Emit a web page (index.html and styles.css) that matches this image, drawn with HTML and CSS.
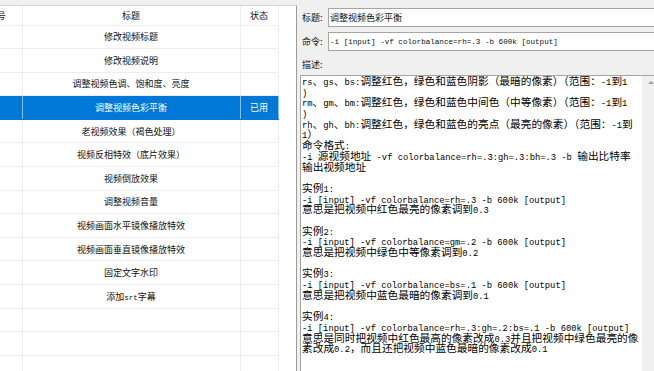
FILE: index.html
```html
<!DOCTYPE html>
<html>
<head>
  <meta charset="utf-8">
  <title>视频命令</title>
  <link rel="stylesheet" href="styles.css">
</head>
<body>
  <div class="window">
    <div class="list">
      <table class="grid">
        <colgroup>
          <col class="c-no">
          <col class="c-title">
          <col class="c-state">
        </colgroup>
        <thead>
          <tr><th>序号</th><th>标题</th><th>状态</th></tr>
        </thead>
        <tbody>
          <tr><td></td><td>修改视频标题</td><td></td></tr>
          <tr><td></td><td>修改视频说明</td><td></td></tr>
          <tr><td></td><td>调整视频色调、饱和度、亮度</td><td></td></tr>
          <tr class="sel"><td></td><td>调整视频色彩平衡</td><td>已用</td></tr>
          <tr><td></td><td>老视频效果（褐色处理）</td><td></td></tr>
          <tr><td></td><td>视频反相特效（底片效果）</td><td></td></tr>
          <tr><td></td><td>视频倒放效果</td><td></td></tr>
          <tr><td></td><td>调整视频音量</td><td></td></tr>
          <tr><td></td><td>视频画面水平镜像播放特效</td><td></td></tr>
          <tr><td></td><td>视频画面垂直镜像播放特效</td><td></td></tr>
          <tr><td></td><td>固定文字水印</td><td></td></tr>
          <tr><td></td><td>添加<span class="en">srt</span>字幕</td><td></td></tr>
          <tr><td></td><td></td><td></td></tr>
          <tr><td></td><td></td><td></td></tr>
          <tr><td></td><td></td><td></td></tr>
        </tbody>
      </table>
    </div>

    <div class="detail">
      <div class="field">
        <span class="label">标题:</span>
        <div class="box">调整视频色彩平衡</div>
      </div>
      <div class="field">
        <span class="label">命令:</span>
        <div class="box cmd">-i [input] -vf colorbalance=rh=.3 -b 600k [output]</div>
      </div>
      <div class="caption">描述:</div>
      <div class="memo">
        <div class="memo-text">
          <div class="ln"><span class="en">rs</span>、<span class="en">gs</span>、<span class="en">bs:</span>调整红色，绿色和蓝色阴影（最暗的像素）（范围：<span class="en">-1</span>到<span class="en">1</span></div>
          <div class="ln"><span class="en">)</span></div>
          <div class="ln"><span class="en">rm</span>、<span class="en">gm</span>、<span class="en">bm:</span>调整红色，绿色和蓝色中间色（中等像素）（范围：<span class="en">-1</span>到<span class="en">1</span></div>
          <div class="ln"><span class="en">)</span></div>
          <div class="ln"><span class="en">rh</span>、<span class="en">gh</span>、<span class="en">bh:</span>调整红色，绿色和蓝色的亮点（最亮的像素）（范围：<span class="en">-1</span>到</div>
          <div class="ln"><span class="en">1</span>）</div>
          <div class="ln">命令格式<span class="en">:</span></div>
          <div class="ln"><span class="en">-i </span>源视频地址<span class="en"> -vf colorbalance=rh=.3:gh=.3:bh=.3 -b </span>输出比特率</div>
          <div class="ln">输出视频地址</div>
          <div class="ln"></div>
          <div class="ln">实例<span class="en">1:</span></div>
          <div class="ln"><span class="en">-i [input] -vf colorbalance=rh=.3 -b 600k [output]</span></div>
          <div class="ln">意思是把视频中红色最亮的像素调到<span class="en">0.3</span></div>
          <div class="ln"></div>
          <div class="ln">实例<span class="en">2:</span></div>
          <div class="ln"><span class="en">-i [input] -vf colorbalance=gm=.2 -b 600k [output]</span></div>
          <div class="ln">意思是把视频中绿色中等像素调到<span class="en">0.2</span></div>
          <div class="ln"></div>
          <div class="ln">实例<span class="en">3:</span></div>
          <div class="ln"><span class="en">-i [input] -vf colorbalance=bs=.1 -b 600k [output]</span></div>
          <div class="ln">意思是把视频中蓝色最暗的像素调到<span class="en">0.1</span></div>
          <div class="ln"></div>
          <div class="ln">实例<span class="en">4:</span></div>
          <div class="ln"><span class="en">-i [input] -vf colorbalance=rh=.3:gh=.2:bs=.1 -b 600k [output]</span></div>
          <div class="ln">意思是同时把视频中红色最高的像素改成<span class="en">0.3</span>并且把视频中绿色最亮的像</div>
          <div class="ln">素改成<span class="en">0.2</span>，而且还把视频中蓝色最暗的像素改成<span class="en">0.1</span></div>
        </div>
        <div class="scroll"><span class="arrow"></span></div>
      </div>
    </div>
  </div>
</body>
</html>
```

FILE: styles.css
```css
html, body {
  margin: 0;
  height: 100%;
}

body {
  background-color: #f0f0f0;
  font-family: "Noto Sans CJK SC", sans-serif;
  color: #111;
  overflow: hidden;
}

.window {
  display: flex;
  height: 371px;
  padding-top: 5px;
  box-sizing: border-box;
}

/* List Styling */
.list {
  width: 296px;
  flex: none;
  background-color: #fff;
  border-top: 1px solid #d4d4d4;
  border-right: 1px solid #9c9c9c;
  overflow: hidden;
}

.grid {
  width: 306px;
  margin-left: -28px;
  border-collapse: collapse;
  table-layout: fixed;
  font-size: 9px;
}

.c-no { width: 50px; }
.c-title { width: 218px; }
.c-state { width: 38px; }

.grid th,
.grid td {
  padding: 0;
  text-align: center;
  font-weight: normal;
  white-space: nowrap;
  border-right: 1px solid #ededed;
  border-bottom: 1px solid #ededed;
}

.grid thead tr {
  height: 19px;
}

.grid tbody tr {
  height: 23.6px;
}

.grid tr.sel td {
  background-color: #0078d7;
  color: #fff;
  border-right-color: #8cc0ea;
  border-bottom-color: #0078d7;
}

.grid .en {
  font-family: "Liberation Mono", monospace;
  font-size: 7.6px;
}

/* Detail Styling */
.detail {
  flex: 1;
  min-width: 0;
  display: flex;
  flex-direction: column;
  padding-left: 5px;
  font-size: 9px;
}

.field {
  display: flex;
  align-items: center;
  height: 19px;
  margin-top: 3px;
}

.field + .field {
  margin-top: 5px;
}

.label {
  width: 26px;
  flex: none;
}

.box {
  flex: 1;
  height: 19px;
  box-sizing: border-box;
  margin-right: -6px;
  padding-left: 1px;
  display: flex;
  align-items: center;
  background-color: #fff;
  border: 1px solid #a5a5a5;
  white-space: nowrap;
}

.cmd {
  font-family: "Liberation Mono", monospace;
  font-size: 7.6px;
}

.caption {
  height: 18px;
  line-height: 18px;
  margin-top: 5px;
}

.memo {
  flex: 1;
  display: flex;
  margin: 1px -6px 0 -2px;
  background-color: #fff;
  border: 1px solid #a5a5a5;
  border-bottom: none;
  overflow: hidden;
}

.memo-text {
  flex: 1;
  padding: 0 0 0 1px;
  font-size: 10.7px;
  color: #000;
}

.ln {
  height: 10.7px;
  line-height: 10.7px;
  white-space: pre;
}

.memo .en {
  font-family: "Liberation Mono", monospace;
  font-size: 8.8px;
}

.scroll {
  width: 17px;
  flex: none;
  background-color: #f0f0f0;
  display: flex;
  justify-content: center;
}

.arrow {
  width: 0;
  height: 0;
  margin-top: 5px;
  border-left: 3px solid transparent;
  border-right: 3px solid transparent;
  border-bottom: 3px solid #a3a3a3;
}
```
